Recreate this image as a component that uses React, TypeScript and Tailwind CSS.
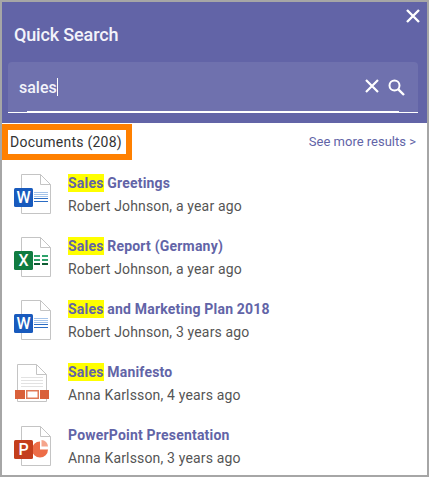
import { ReactNode } from "react";

const DocSheet = () => (
  <path
    d="M7.5 1.5H26.5L36.5 11.5V40.5H7.5Z M26.5 1.5V11.5H36.5"
    fill="#fff"
    stroke="#c4c4c4"
    strokeWidth="1"
  />
);

const Badge = ({ color, letter }: { color: string; letter: string }) => (
  <>
    <rect x="0" y="15" width="19" height="19" rx="1.5" fill={color} />
    <text x="9.5" y="30.3" textAnchor="middle" fontSize="16" fontWeight="500" fill="#fff" fontFamily="Roboto, sans-serif">
      {letter}
    </text>
  </>
);

const WordIcon = () => (
  <svg width="40" height="42" viewBox="0 0 40 42" className="block">
    <DocSheet />
    <path d="M20 19h14v1H20zM20 21h14v1H20zM20 23h14v1H20z" fill="#a5c4ea" />
    <path d="M20 25h14v1H20zM20 28h14v1H20z" fill="#2b6cc4" />
    <Badge color="#185abd" letter="W" />
  </svg>
);

const ExcelIcon = () => (
  <svg width="40" height="42" viewBox="0 0 40 42" className="block">
    <DocSheet />
    <path d="M20 19h6v2h-6zM28 19h6v2h-6zM20 23h6v2h-6zM28 23h6v2h-6z" fill="#2fa36b" />
    <path d="M20 27h6v2h-6zM28 27h6v2h-6z" fill="#0e5c33" />
    <Badge color="#107c41" letter="X" />
  </svg>
);

const SlideIcon = () => (
  <svg width="40" height="42" viewBox="0 0 40 42" className="block">
    <path d="M3.5 2.5H22.5L32.5 12.5V39.5H3.5Z M22.5 2.5V12.5H32.5" fill="#fff" stroke="#c4c4c4" strokeWidth="1" />
    <path d="M7 15h22v1H7zM7 18h22v1H7zM7 21h22v1H7zM7 24h22v1H7z" fill="#e2e2e2" />
    <rect x="1" y="28" width="10" height="9" fill="#d9603a" />
    <rect x="12.75" y="28.75" width="11.5" height="7.5" fill="#fff" stroke="#e07a58" strokeWidth="1.5" />
    <rect x="26" y="28" width="9" height="9" fill="#d9603a" />
  </svg>
);

const PowerPointIcon = () => (
  <svg width="40" height="42" viewBox="0 0 40 42" className="block">
    <DocSheet />
    <path d="M26 16.5a8 8 0 1 0 8 8H26Z" fill="#ed6c47" />
    <path d="M27.5 15a6.5 6.5 0 0 1 6.5 6.5H27.5Z" fill="#f5a58c" />
    <Badge color="#c43e1c" letter="P" />
  </svg>
);

const results: { match: boolean; title: string; meta: string; icon: ReactNode }[] = [
  { match: true, title: " Greetings", meta: "Robert Johnson, a year ago", icon: <WordIcon /> },
  { match: true, title: " Report (Germany)", meta: "Robert Johnson, a year ago", icon: <ExcelIcon /> },
  { match: true, title: " and Marketing Plan 2018", meta: "Robert Johnson, 3 years ago", icon: <WordIcon /> },
  { match: true, title: " Manifesto", meta: "Anna Karlsson, 4 years ago", icon: <SlideIcon /> },
  { match: false, title: "PowerPoint Presentation", meta: "Anna Karlsson, 3 years ago", icon: <PowerPointIcon /> },
];

export default function App() {
  return (
    <div className="h-[477px] w-[429px] overflow-hidden border-2 border-[#a6a6a6] bg-white font-['Roboto',sans-serif]">
      <div className="relative h-[121px] bg-[#6264a7] px-[6px] pt-[21px]">
        <button type="button" className="absolute right-[6px] top-[6px] text-white">
          <svg width="16" height="16" viewBox="0 0 16 16" className="block">
            <path d="M2 2l12 12M14 2L2 14" stroke="#fff" strokeWidth="2.4" fill="none" />
          </svg>
        </button>
        <h1 className="pl-[6px] text-[18px] font-medium leading-[24px] tracking-[-0.15px] text-[#f3f3fa]">Quick Search</h1>
        <div className="relative mt-[15px] flex h-[51px] w-[410px] items-center rounded-t-[4px] border-b border-white bg-[#6f71ae] pb-[2px] pl-[11px] pr-[13px]">
          <div className="flex-1 text-[16px] font-medium leading-[20px] text-[#f3f3fa]">
            sales<span className="ml-[0.5px] inline-block h-[18px] w-px translate-y-[3px] bg-white" />
          </div>
          <svg width="16" height="16" viewBox="0 0 16 16" className="mr-[8px] block">
            <path d="M2 2l12 12M14 2L2 14" stroke="#fff" strokeWidth="2.2" fill="none" />
          </svg>
          <svg width="17" height="17" viewBox="0 0 17 17" className="mt-[3px] block">
            <circle cx="6.5" cy="6.5" r="5" stroke="#fff" strokeWidth="2" fill="none" />
            <path d="M10.3 10.3L16 16" stroke="#fff" strokeWidth="2.4" fill="none" />
          </svg>
          <span className="absolute bottom-[-1px] left-[19px] right-[19px] h-[2px] bg-white" />
        </div>
      </div>
      <div className="flex h-[37px] items-start justify-between pr-[11px]">
        <div className="mt-[1px] flex h-[36px] w-[130px] items-center whitespace-nowrap border-[6px] border-[#ff8000] pl-[2px] text-[14px] leading-[20px] tracking-[0.25px] text-[#333]">
          Documents (208)
        </div>
        <a className="mt-[10px] text-[13px] leading-[18px] text-[#6264a7]">See more results &gt;</a>
      </div>
      <ul className="pl-[12px] pt-[11px]">
        {results.map((r) => (
          <li key={r.title} className="flex h-[63px] items-start">
            <div className="mt-[2px]">{r.icon}</div>
            <div className="ml-[14px] pt-[2px]">
              <div className="text-[14px] font-bold leading-[20px] tracking-[0.2px] text-[#6264a7]">
                {r.match && <span className="bg-[#ffff00] py-[1px]">Sales</span>}
                <span className="whitespace-pre">{r.title}</span>
              </div>
              <div className="mt-[3px] text-[14px] leading-[20px] tracking-[0.16px] text-[#555]">{r.meta}</div>
            </div>
          </li>
        ))}
      </ul>
    </div>
  );
}
